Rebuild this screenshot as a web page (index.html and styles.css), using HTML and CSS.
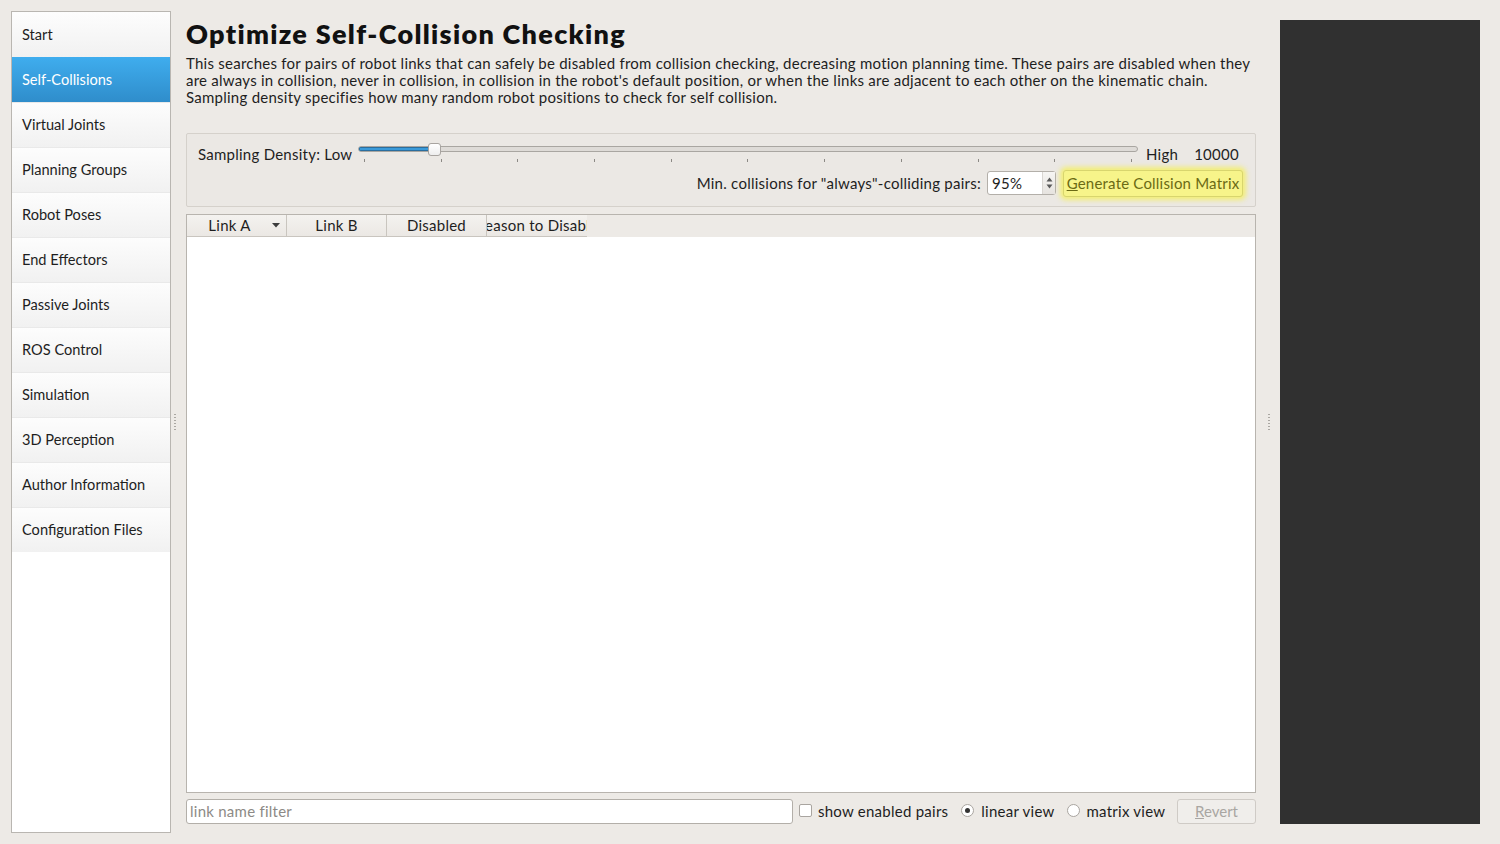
FILE: index.html
```html
<!DOCTYPE html>
<html>
<head>
<meta charset="utf-8">
<link rel="stylesheet" href="styles.css">
</head>
<body>
<div class="app">
  <nav class="sidebar">
    <div class="nav-item">Start</div>
    <div class="nav-item active">Self-Collisions</div>
    <div class="nav-item">Virtual Joints</div>
    <div class="nav-item">Planning Groups</div>
    <div class="nav-item">Robot Poses</div>
    <div class="nav-item">End Effectors</div>
    <div class="nav-item">Passive Joints</div>
    <div class="nav-item">ROS Control</div>
    <div class="nav-item">Simulation</div>
    <div class="nav-item">3D Perception</div>
    <div class="nav-item">Author Information</div>
    <div class="nav-item">Configuration Files</div>
  </nav>
  <div class="splitter left-split"><span class="grip"></span></div>
  <main class="main">
    <h1 class="title">Optimize Self-Collision Checking</h1>
    <p class="desc">This searches for pairs of robot links that can safely be disabled from collision checking, decreasing motion planning time. These pairs are disabled when they are always in collision, never in collision, in collision in the robot's default position, or when the links are adjacent to each other on the kinematic chain. Sampling density specifies how many random robot positions to check for self collision.</p>
    <section class="group">
      <div class="row1">
        <span class="lbl density-lbl">Sampling Density: Low</span>
        <div class="slider">
          <div class="track">
            <div class="groove"><div class="fill"></div></div>
            <div class="handle"></div>
          </div>
          <div class="ticks">
            <i></i><i></i><i></i><i></i><i></i><i></i><i></i><i></i><i></i><i></i><i></i>
          </div>
        </div>
        <span class="lbl high">High</span>
        <span class="lbl count">10000</span>
      </div>
      <div class="row2">
        <span class="lbl">Min. collisions for "always"-colliding pairs:</span>
        <div class="spin">
          <span class="spin-val">95%</span>
          <span class="spin-arrows">
            <svg width="9" height="18" viewBox="0 0 9 18"><path d="M1.5 7.5 L4.5 3.5 L7.5 7.5 Z" fill="#5a5a5a"/><path d="M1.5 10.5 L4.5 14.5 L7.5 10.5 Z" fill="#5a5a5a"/></svg>
          </span>
        </div>
        <button class="gen-btn"><u>G</u>enerate Collision Matrix</button>
      </div>
    </section>
    <section class="table">
      <div class="thead">
        <div class="th sorted">Link A<span class="sort"><svg width="8" height="5" viewBox="0 0 8 5"><path d="M0 0 L8 0 L4 4.5 Z" fill="#3c3c3c"/></svg></span></div>
        <div class="th">Link B</div>
        <div class="th">Disabled</div>
        <div class="th clip"><span>Reason to Disable</span></div>
      </div>
      <div class="tbody"></div>
    </section>
    <div class="bottom">
      <input class="filter" type="text" placeholder="link name filter">
      <label class="opt"><span class="check"></span>show enabled pairs</label>
      <label class="opt"><span class="radio on"></span>linear view</label>
      <label class="opt"><span class="radio"></span>matrix view</label>
      <button class="revert" disabled><u>R</u>evert</button>
    </div>
  </main>
  <div class="splitter right-split"><span class="grip"></span></div>
  <aside class="viewer"></aside>
</div>
</body>
</html>
```

FILE: styles.css
```css
* { box-sizing: border-box; }
html, body {
  margin: 0;
  padding: 0;
  background: #edeae6;
  font-family: Lato, "Open Sans", "DejaVu Sans", sans-serif;
  font-size: 14.6px;
  color: #1e1e1e;
}
.app {
  display: flex;
  height: 844px;
  width: 1500px;
  padding: 11px 20px 11px 11px;
}
.sidebar {
  width: 160px;
  flex: none;
  background: #fff;
  border: 1px solid #b9b6b1;
  display: flex;
  flex-direction: column;
}
.nav-item {
  height: 45px;
  flex: none;
  display: flex;
  align-items: center;
  padding: 0 0 1px 10px;
  background:
    linear-gradient(#e9e9e9, #e9e9e9) top / 100% 1px no-repeat,
    linear-gradient(#fdfdfd, #f1f1f1);
}
.nav-item:first-child {
  background: linear-gradient(#fdfdfd, #f1f1f1);
}
.nav-item.active {
  background: linear-gradient(#3fadee, #2f8dcb);
  color: #fff;
}
.splitter {
  flex: none;
  display: flex;
  align-items: center;
  justify-content: center;
}
.left-split { width: 15px; justify-content: flex-start; padding-left: 3px; }
.right-split { width: 24px; padding-left: 1px; }
.grip {
  width: 2px;
  height: 17px;
  background: repeating-linear-gradient(#aaa7a2 0 1px, transparent 1px 3px);
}
.main {
  width: 1070px;
  flex: none;
  display: flex;
  flex-direction: column;
  padding-bottom: 9px;
  font-size: 15px;
  letter-spacing: 0.25px;
}
.title {
  margin: 7px 0 0 0;
  font-size: 27px;
  line-height: 32px;
  font-weight: 800;
  letter-spacing: 1.3px;
  color: #111;
}
.desc {
  margin: 5px 0 0 0;
  line-height: 17px;
}
.group {
  margin-top: 27px;
  height: 74px;
  border: 1px solid #d5d1cb;
  border-radius: 2px;
  background: #ebe8e4;
  padding: 9px 12px 0 11px;
}
.row1 {
  display: flex;
  align-items: flex-start;
  height: 24px;
}
.lbl { line-height: 24px; white-space: nowrap; }
.row1 .lbl { line-height: 22px; }
.density-lbl { width: 160px; flex: none; }
.slider { width: 780px; flex: none; }
.track {
  position: relative;
  height: 12px;
  display: flex;
  align-items: center;
}
.groove {
  width: 100%;
  height: 6px;
  border: 1px solid #a9a6a1;
  border-radius: 3px;
  background: #dedbd7;
  overflow: hidden;
}
.fill {
  width: 74px;
  height: 100%;
  background: #3a9ad9;
  box-shadow: inset 0 0 0 1px #2b6e9e;
}
.handle {
  position: absolute;
  left: 70px;
  top: 0;
  width: 13px;
  height: 13px;
  border: 1px solid #a8a4a0;
  border-radius: 3px;
  background: linear-gradient(#ffffff, #eeeeee);
}
.ticks {
  display: flex;
  justify-content: space-between;
  padding: 0 6px;
  margin-top: 4px;
}
.ticks i {
  width: 1px;
  height: 3px;
  background: #8c8985;
}
.high { margin-left: 8px; }
.count { margin-left: 16px; }
.row2 {
  margin-top: 2px;
  height: 28px;
  display: flex;
  align-items: center;
  justify-content: flex-end;
}
.spin {
  margin-left: 6px;
  width: 69px;
  height: 24px;
  background: #fff;
  border: 1px solid #b3afa9;
  border-radius: 3px;
  display: flex;
  align-items: center;
}
.spin-val { flex: 1; padding-left: 4px; }
.spin-arrows {
  width: 13px;
  height: 22px;
  border-left: 1px solid #d9d6d2;
  background: linear-gradient(#f6f5f3, #e6e3df);
  display: flex;
  align-items: center;
  justify-content: center;
}
.spin-arrows svg { display: block; }
.gen-btn {
  margin-left: 7px;
  width: 180px;
  height: 27px;
  padding: 0;
  font: inherit;
  letter-spacing: 0.2px;
  color: #6b6a14;
  background: #f7f48a;
  border: 1px solid #d8d56e;
  border-radius: 3px;
  box-shadow: 0 0 5px 3px rgba(245, 240, 80, 0.75);
  white-space: nowrap;
}
.table {
  margin-top: 7px;
  flex: 1;
  background: #fff;
  border: 1px solid #b8b4ae;
  display: flex;
  flex-direction: column;
}
.thead {
  height: 22px;
  flex: none;
  display: flex;
  background: #edeae6;
}
.th {
  width: 100px;
  flex: none;
  display: flex;
  justify-content: center;
  align-items: center;
  position: relative;
  padding-bottom: 2px;
  background: linear-gradient(#f4f2ef, #ebe8e4);
  border-right: 1px solid #c9c5bf;
  border-bottom: 1px solid #c9c5bf;
  white-space: nowrap;
  overflow: hidden;
}
.th.sorted { padding-right: 14px; }
.th.clip { border-right: none; }
.th.clip span { flex: none; }
.sort {
  position: absolute;
  right: 6px;
  top: 8px;
  display: flex;
}
.tbody { flex: 1; }
.bottom {
  margin-top: 6px;
  height: 25px;
  display: flex;
  align-items: center;
}
.filter {
  width: 607px;
  height: 25px;
  flex: none;
  margin: 0;
  border: 1px solid #b3afa9;
  border-radius: 3px;
  background: #fff;
  font: inherit;
  letter-spacing: 0.25px;
  padding: 0 3px 1px;
  color: #1e1e1e;
}
.filter::placeholder { color: #8d8a86; }
.opt {
  display: flex;
  align-items: center;
  white-space: nowrap;
  line-height: 20px;
  padding-bottom: 2px;
}
.opt:nth-of-type(1) { margin-left: 6px; }
.opt:nth-of-type(2) { margin-left: 13px; }
.opt:nth-of-type(3) { margin-left: 12px; }
.check {
  width: 13px;
  height: 13px;
  background: #fff;
  border: 1px solid #a9a5a0;
  border-radius: 2px;
  margin-right: 6px;
}
.radio {
  width: 13px;
  height: 13px;
  border-radius: 50%;
  border: 1px solid #a9a5a0;
  background: #fff;
  margin-right: 7px;
  display: flex;
  align-items: center;
  justify-content: center;
}
.radio.on::after {
  content: "";
  width: 5px;
  height: 5px;
  border-radius: 50%;
  background: #333;
}
.revert {
  margin-left: auto;
  width: 79px;
  height: 25px;
  padding: 0 0 1px;
  font: inherit;
  color: #a9a6a2;
  background: #f0eeeb;
  border: 1px solid #cfcbc6;
  border-radius: 3px;
}
.viewer {
  width: 200px;
  flex: none;
  margin: 9px 0;
  background: #303030;
}
```
